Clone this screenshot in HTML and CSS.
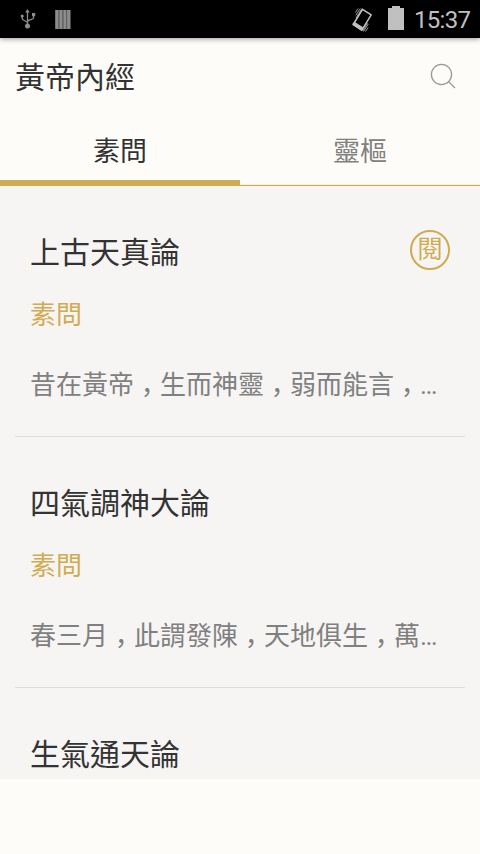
FILE: index.html
```html
<!DOCTYPE html>
<html lang="zh-Hant">
<head>
  <meta charset="utf-8">
  <meta name="viewport" content="width=device-width, initial-scale=1">
  <title>黃帝內經</title>
  <link rel="stylesheet" href="styles.css">
</head>
<body>
  <div class="status-bar">
    <svg class="usb" width="16" height="20" viewBox="0 0 16 20" fill="none" stroke="#8c8c8c" stroke-width="1.3">
      <path d="M7.500 16V3M2.200 7v2.500c0 2 5.300 2.500 5.300 4.500M13.500 6v3c0 2-6 1.500-6 4"/>
      <path d="M5.200 3.500L7.500 0l2.300 3.500z" fill="#8c8c8c" stroke="none"/>
      <circle cx="7.500" cy="17" r="2.500" fill="#8c8c8c" stroke="none"/>
      <circle cx="2.200" cy="7" r="1.600" fill="#8c8c8c" stroke="none"/>
      <path d="M12 4h3.200v3.200H12z" fill="#8c8c8c" stroke="none"/>
    </svg>
    <svg class="bars" width="16" height="19" viewBox="0 0 16 19" fill="#8c8c8c">
      <path d="M.3 0h3.300v19H.3zM4.300 0h3.300v19H4.300zM8.300 0h3.200v19H8.300zM12.100 0h3.300v19h-3.300z"/>
      <path d="M0 0h15.500v19H0z" opacity=".35"/>
    </svg>
    <svg class="vibrate" width="22" height="26" viewBox="0 0 22 26" fill="none" stroke="#c0c0c0">
      <path d="M11.500 2.300L20.200 7.900 10.800 23.200 2.200 17.500z" stroke-width="1.500" stroke-linejoin="round"/>
      <path d="M1.800 17.300l1.500-2.100 8.700 5.500-1.300 2.800z" fill="#c0c0c0"/>
      <path d="M9.300 1.500L4.800 8.300M7 1.500L4.500 5.500M11 1.500L5 11M12.500 24.500L17.300 17M14.500 24.500L17 20.500M11.700 24L16.500 16" stroke-width=".8"/>
    </svg>
    <svg class="battery" width="16" height="24" viewBox="0 0 16 24" fill="#c0c0c0">
      <path d="M4 0h8v2h4v22H0V2h4z"/>
    </svg>
    <span class="clock">15:37</span>
  </div>

  <header class="header">
    <h1>黃帝內經</h1>
    <svg width="26" height="26" viewBox="0 0 26 26" fill="none" stroke="#999" stroke-width="1.300">
      <circle cx="11.500" cy="11.500" r="10.100"/>
      <path d="M18.500 18.500L25 25"/>
    </svg>
  </header>

  <nav class="tabs">
    <a class="tab active">素問</a>
    <a class="tab">靈樞</a>
  </nav>

  <main class="list">
    <article class="item">
      <div class="title-row">
        <h2>上古天真論</h2>
        <span class="read">閱</span>
      </div>
      <div class="category">素問</div>
      <p class="summary">昔在黃帝<span class="comma">，</span>生而神靈<span class="comma">，</span>弱而能言<span class="comma">，</span>…</p>
    </article>
    <article class="item">
      <div class="title-row">
        <h2>四氣調神大論</h2>
      </div>
      <div class="category">素問</div>
      <p class="summary">春三月<span class="comma">，</span>此謂發陳<span class="comma">，</span>天地俱生<span class="comma">，</span>萬…</p>
    </article>
    <article class="item">
      <div class="title-row">
        <h2>生氣通天論</h2>
      </div>
    </article>
  </main>
</body>
</html>
```
FILE: styles.css
```css
* {
  box-sizing: border-box;
}
body {
  margin: 0;
  height: 854px;
  overflow: hidden;
  background: #fdfcf8;
  color: #333;
  font-family: Roboto, "Noto Sans CJK TC", sans-serif;
}
h1, h2, p {
  margin: 0;
  font-weight: normal;
}
.status-bar {
  display: flex;
  align-items: center;
  height: 38px;
  padding: 0 9px 0 20px;
  background: #000;
  box-shadow: 0 1px 5px rgba(0, 0, 0, 0.4);
}
.bars {
  margin-left: 19px;
}
.vibrate {
  margin-left: auto;
  margin-top: 1px;
}
.battery {
  margin: 0 10px 2px 15px;
}
.clock {
  width: 57px;
  color: #c0c0c0;
  font-size: 24px;
  letter-spacing: -0.7px;
  line-height: 38px;
  padding-top: 2px;
}
.header {
  display: flex;
  align-items: center;
  justify-content: space-between;
  height: 77px;
  padding: 0 24px 0 15px;
}
.header h1 {
  padding-top: 2px;
  font-size: 30px;
  line-height: 40px;
}
.header svg {
  margin-bottom: 1px;
}
.tabs {
  display: flex;
  height: 71px;
}
.tab {
  flex: 1;
  padding-top: 4px;
  color: #808080;
  font-size: 27px;
  line-height: 66px;
  text-align: center;
  border-bottom: 1px solid #cfac52;
  box-shadow: inset 0 -1px #f8efdc;
}
.tab.active {
  color: #333;
  border-bottom-width: 6px;
  box-shadow: none;
}
.list {
  height: 593px;
  padding: 0 15px;
  overflow: hidden;
  background: #f7f5f4;
}
.item {
  height: 251px;
  padding: 44px 15px 0;
  border-bottom: 1px solid #dedddb;
}
.title-row {
  display: flex;
  align-items: center;
  justify-content: space-between;
  height: 40px;
}
.title-row h2 {
  padding-top: 5px;
  font-size: 30px;
  line-height: 40px;
}
.read {
  width: 40px;
  height: 40px;
  border: 2px solid #cfac52;
  border-radius: 50%;
  color: #cfac52;
  font-size: 25px;
  line-height: 36px;
  text-align: center;
}
.category {
  margin-top: 25px;
  color: #cfac52;
  font-size: 26px;
  line-height: 40px;
}
.summary {
  margin-top: 30px;
  color: #808080;
  font-size: 26px;
  line-height: 40px;
  white-space: nowrap;
}
/* drop the centred full-width comma to the baseline */
.comma {
  line-height: 1;
  vertical-align: -8px;
}
```
